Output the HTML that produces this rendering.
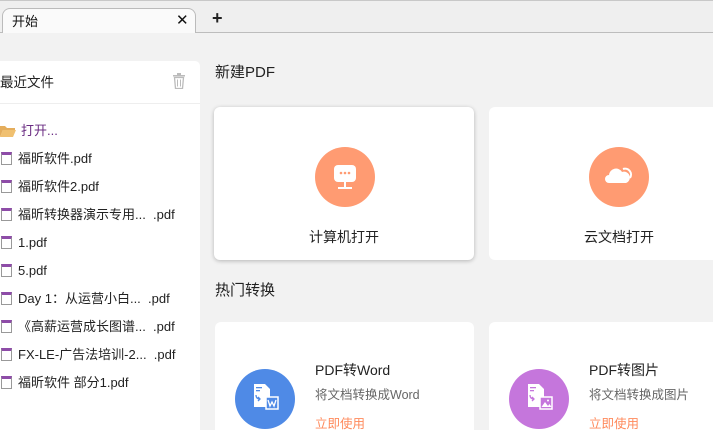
<!DOCTYPE html>
<html><head><meta charset="utf-8"><style>
*{margin:0;padding:0;box-sizing:border-box}
html,body{width:713px;height:430px;overflow:hidden}
body{background:#f2f2f2;font-family:"Liberation Sans","Noto Sans CJK SC",sans-serif;position:relative;color:#333}
.top{position:absolute;left:0;top:0;width:713px;height:33px;background:#efefef;border-top:1px solid #c8c8c8;border-bottom:1px solid #bdbdbd}
.tab{position:absolute;left:2px;top:8px;width:194px;height:25px;background:#fafafa;border:1px solid #bbb;border-bottom:none;border-radius:8px 8px 0 0}
.t{position:absolute;font-size:13px;white-space:nowrap;line-height:18px}
.panel{position:absolute;left:0;top:61px;width:200px;height:369px;background:#fff;border-radius:0 5px 0 0}
.item{position:absolute;left:0;font-size:13px;line-height:16px;height:16px;color:#222;white-space:nowrap}
.fi{display:inline-block;width:11px;height:13px;border:1px solid #999;border-top:3px solid #8e4ca8;vertical-align:-2px;margin-right:6px;margin-left:1px}
.card{position:absolute;background:#fff;border-radius:6px}
.circ{position:absolute;width:60px;height:60px;border-radius:50%}
</style></head><body>
<div class="top"></div>
<div class="tab"></div>
<div class="t" style="left:12px;top:13px;font-size:13px;color:#111">开始</div>
<div class="t" style="left:176px;top:12px;font-size:15px;color:#111">✕</div>
<div class="t" style="left:212px;top:9px;font-size:18px;font-weight:bold;color:#222">+</div>
<div class="panel">
 <div style="position:absolute;left:0;top:42px;width:200px;height:1px;background:#eee"></div>
</div>
<div class="t" style="left:0;top:74px;font-size:13.5px;color:#222">最近文件</div>
<svg style="position:absolute;left:172px;top:73px" width="14" height="16" viewBox="0 0 14 16"><rect x="1" y="2" width="12" height="1.5" fill="#bbb"/><rect x="5" y="0" width="4" height="2" fill="#bbb"/><path d="M2.5 4.5h9l-1 11h-7z" fill="none" stroke="#bbb" stroke-width="1.3"/><path d="M5.5 6.5v7M8.5 6.5v7" stroke="#bbb"/></svg>
<svg style="position:absolute;left:0;top:125px" width="16" height="12"><path d="M0 1h5l2 2h8v2H3L0 12z" fill="#e4ad5c"/><path d="M3 5h13l-3 7H0z" fill="#f0c070"/></svg>
<div class="item" style="left:21px;top:123px;color:#6a2c82">打开...</div>
<div class="item" style="top:151px"><span class="fi"></span>福昕软件.pdf</div>
<div class="item" style="top:179px"><span class="fi"></span>福昕软件2.pdf</div>
<div class="item" style="top:207px"><span class="fi"></span>福昕转换器演示专用...&nbsp;&nbsp;.pdf</div>
<div class="item" style="top:235px"><span class="fi"></span>1.pdf</div>
<div class="item" style="top:263px"><span class="fi"></span>5.pdf</div>
<div class="item" style="top:291px"><span class="fi"></span>Day 1：从运营小白...&nbsp;&nbsp;.pdf</div>
<div class="item" style="top:319px"><span class="fi"></span>《高薪运营成长图谱...&nbsp;&nbsp;.pdf</div>
<div class="item" style="top:347px"><span class="fi"></span>FX-LE-广告法培训-2...&nbsp;&nbsp;.pdf</div>
<div class="item" style="top:375px"><span class="fi"></span>福昕软件 部分1.pdf</div>

<div class="t" style="left:215px;top:64px;font-size:15px;color:#222">新建PDF</div>
<div class="card" style="left:214px;top:107px;width:260px;height:153px;box-shadow:0 1px 4px rgba(0,0,0,.25)"></div>
<div class="card" style="left:489px;top:107px;width:240px;height:153px"></div>
<div class="circ" style="left:315px;top:147px;background:#ff9b72"></div>
<svg style="position:absolute;left:331px;top:163px" width="28" height="28" viewBox="0 0 28 28"><rect x="3" y="2" width="22" height="17" rx="4" fill="#fff"/><rect x="13" y="19" width="2" height="5" fill="#fff"/><rect x="7" y="24" width="14" height="2" fill="#fff"/><circle cx="10" cy="10" r="1.3" fill="#ff9b72"/><circle cx="14" cy="10" r="1.3" fill="#ff9b72"/><circle cx="18" cy="10" r="1.3" fill="#ff9b72"/></svg>
<div class="circ" style="left:589px;top:147px;background:#ff9b72"></div>
<svg style="position:absolute;left:605px;top:165px" width="28" height="22" viewBox="0 0 28 22"><path d="M4 18a4 4 0 0 1 0-8a7 7 0 0 1 13-3a5 5 0 0 1 4 11z" fill="#fff"/><path d="M18 4a6 6 0 0 1 7 9" fill="none" stroke="#fff" stroke-width="2"/></svg>
<div class="t" style="left:309px;top:228px;font-size:14px;color:#222">计算机打开</div>
<div class="t" style="left:584px;top:228px;font-size:14px;color:#222">云文档打开</div>

<div class="t" style="left:215px;top:282px;font-size:15px;color:#222">热门转换</div>
<div class="card" style="left:215px;top:322px;width:259px;height:120px"></div>
<div class="card" style="left:489px;top:322px;width:240px;height:120px"></div>
<div class="circ" style="left:235px;top:369px;background:#4f8ae6"></div>
<svg style="position:absolute;left:253px;top:383px" width="26" height="28" viewBox="0 0 26 28"><path d="M1 1h11l5 5v8h-4v10H1z" fill="#fff"/><rect x="3" y="4" width="6" height="1.3" fill="#4f8ae6"/><rect x="3" y="7" width="4" height="1.3" fill="#4f8ae6"/><path d="M3 12q0 4 4 4M5 14l2 2-2 2" stroke="#4f8ae6" fill="none" stroke-width="1.3"/><rect x="13" y="14" width="12" height="12" fill="#4f8ae6" stroke="#fff" stroke-width="1.5"/><path d="M15 17l2 6 2-4 2 4 2-6" stroke="#fff" fill="none" stroke-width="1.3"/></svg>
<div class="circ" style="left:509px;top:369px;background:#c576dc"></div>
<svg style="position:absolute;left:527px;top:383px" width="26" height="28" viewBox="0 0 26 28"><path d="M1 1h11l5 5v8h-4v10H1z" fill="#fff"/><rect x="3" y="4" width="6" height="1.3" fill="#c576dc"/><rect x="3" y="7" width="4" height="1.3" fill="#c576dc"/><path d="M3 12q0 4 4 4M5 14l2 2-2 2" stroke="#c576dc" fill="none" stroke-width="1.3"/><rect x="13" y="14" width="12" height="12" fill="#c576dc" stroke="#fff" stroke-width="1.5"/><path d="M14.5 24l3.5-5 3 4 1.5-2 2 3z" fill="#fff"/><circle cx="21" cy="17.5" r="1" fill="#fff"/></svg>
<div class="t" style="left:315px;top:361px;font-size:14px;color:#222">PDF转Word</div>
<div class="t" style="left:315px;top:386px;font-size:12.5px;color:#666">将文档转换成Word</div>
<div class="t" style="left:315px;top:415px;font-size:12.5px;color:#ff8a5c">立即使用</div>
<div class="t" style="left:589px;top:361px;font-size:14px;color:#222">PDF转图片</div>
<div class="t" style="left:589px;top:386px;font-size:12.5px;color:#666">将文档转换成图片</div>
<div class="t" style="left:589px;top:415px;font-size:12.5px;color:#ff8a5c">立即使用</div>
</body></html>
